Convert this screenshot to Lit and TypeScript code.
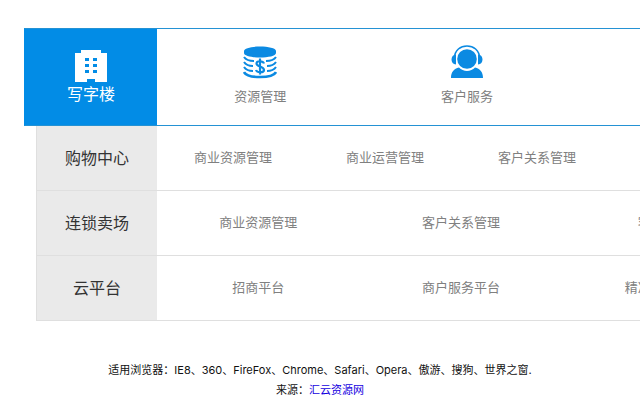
import { LitElement, html, css, svg } from "lit";
import { customElement } from "lit/decorators.js";

interface Row {
  label: string;
  items: string[];
}

const rows: Row[] = [
  { label: "购物中心", items: ["商业资源管理", "商业运营管理", "客户关系管理", "客户服务管理"] },
  { label: "连锁卖场", items: ["商业资源管理", "客户关系管理", "客户服务"] },
  { label: "云平台", items: ["招商平台", "商户服务平台", "精准营销平台"] },
];

const building = svg`<svg class="icon" viewBox="0 0 34 34" aria-hidden="true">
  <path fill="#fff" fill-rule="evenodd" d="M7 1H27V4H33V33H21V30H13V33H1V4H7Z
    M11 9V12H15V9Z M19 9V12H23V9Z M11 15V18H15V15Z M19 15V18H23V15Z M11 21V24H15V21Z M19 21V24H23V21Z"/>
</svg>`;

const coins = svg`<svg class="icon" viewBox="0 0 34 34" aria-hidden="true">
  <path d="M1 6C1 0 33 0 33 6V8C33 14 1 14 1 8Z" fill="#0b8ae2"/>
  <g fill="none" stroke="#0b8ae2" stroke-width="2">
    <path d="M1 12C3 15 7 16 11 16M33 12C31 15 27 16 23 16"/>
    <path d="M1 17C3 20 6 21 10 21M33 17C31 20 28 21 24 21"/>
    <path d="M1 22C3 25 6 26 10 26M33 22C31 25 28 26 24 26"/>
    <path d="M1 27C3 31 9 32 17 32S31 31 33 27" stroke-width="2.6"/>
  </g>
  <path d="M21 18.5C20 15.5 13.5 15.5 13.5 18.5C13.5 22 21 21 21 25C21 28 14 28 13 25M17 13.5V29.5" fill="none" stroke="#0b8ae2" stroke-width="2.2"/>
</svg>`;

const agent = svg`<svg class="icon" viewBox="0 0 34 34" aria-hidden="true">
  <path d="M4.500 13C4.500 -3 29.500 -3 29.500 13" fill="none" stroke="#0b8ae2" stroke-width="1.6"/>
  <path d="M6 9.500C0 9.500 0 19.500 6 19.500ZM28 9.500C34 9.500 34 19.500 28 19.500Z" fill="#0b8ae2"/>
  <circle cx="17" cy="14" r="9.800" fill="#0b8ae2"/>
  <path d="M1 33C1 27 4 23.500 9 22.500C13 27 21 27 25 22.500C30 23.500 33 27 33 33Z" fill="#0b8ae2"/>
</svg>`;

@customElement("app-root")
export class AppRoot extends LitElement {
  static styles = css`
    :host {
      display: block;
      overflow: hidden;
      padding-top: 28px;
      background: #fff;
      font-family: "Liberation Sans", "Noto Sans CJK SC", sans-serif;
      color: #333;
    }
    a {
      color: inherit;
      text-decoration: none;
    }
    ul {
      display: flex;
      flex: 1;
      margin: 0;
      padding: 0;
      list-style: none;
    }
    li {
      flex: 1 1 0;
      display: flex;
      justify-content: center;
      align-items: center;
      font-size: 13px;
      line-height: 20px;
      color: #808080;
    }
    .matrix {
      min-width: 778px;
    }
    .row {
      display: flex;
      box-sizing: border-box;
      height: 65px;
      margin: 0 12px 0 36px;
      border: 1px solid #dfdfdf;
      border-top: 0;
    }
    .label {
      display: flex;
      justify-content: center;
      align-items: center;
      box-sizing: border-box;
      width: 120px;
      padding-top: 2px;
      background: #eaeaea;
      font-size: 16px;
      line-height: 24px;
    }
    .active {
      height: 98px;
      margin: 0 0 0 24px;
      border: 1px solid #2492d4;
      border-left-color: #028ce6;
    }
    .active .label {
      width: 132px;
      background: #028ce6;
      color: #fff;
    }
    .tile {
      display: flex;
      flex-direction: column;
      align-items: center;
      gap: 8px;
    }
    .label .tile {
      gap: 0;
    }
    .active li {
      padding-bottom: 2px;
    }
    .icon {
      display: block;
      width: 34px;
      height: 34px;
    }
    footer {
      padding: 39px 0 0;
      text-align: center;
      font-family: Inter, "Noto Sans CJK SC", sans-serif;
      font-size: 11px;
      line-height: 20px;
      color: #111;
    }
    p {
      margin: 0;
    }
    .source {
      color: #1400e0;
    }
  `;

  render() {
    return html`
      <nav class="matrix">
        <section class="row active">
          <a class="label" href="#office"><span class="tile">${building}<span>写字楼</span></span></a>
          <ul>
            <li><a class="tile" href="#resource">${coins}<span>资源管理</span></a></li>
            <li><a class="tile" href="#service">${agent}<span>客户服务</span></a></li>
            <li></li>
          </ul>
        </section>
        ${rows.map(
          (row) => html`
            <section class="row">
              <a class="label" href="#">${row.label}</a>
              <ul>
                ${row.items.map((item) => html`<li><a href="#">${item}</a></li>`)}
              </ul>
            </section>
          `
        )}
      </nav>
      <footer>
        <p>适用浏览器：IE8、360、FireFox、Chrome、Safari、Opera、傲游、搜狗、世界之窗.</p>
        <p>来源：<a class="source" href="#">汇云资源网</a></p>
      </footer>
    `;
  }
}
